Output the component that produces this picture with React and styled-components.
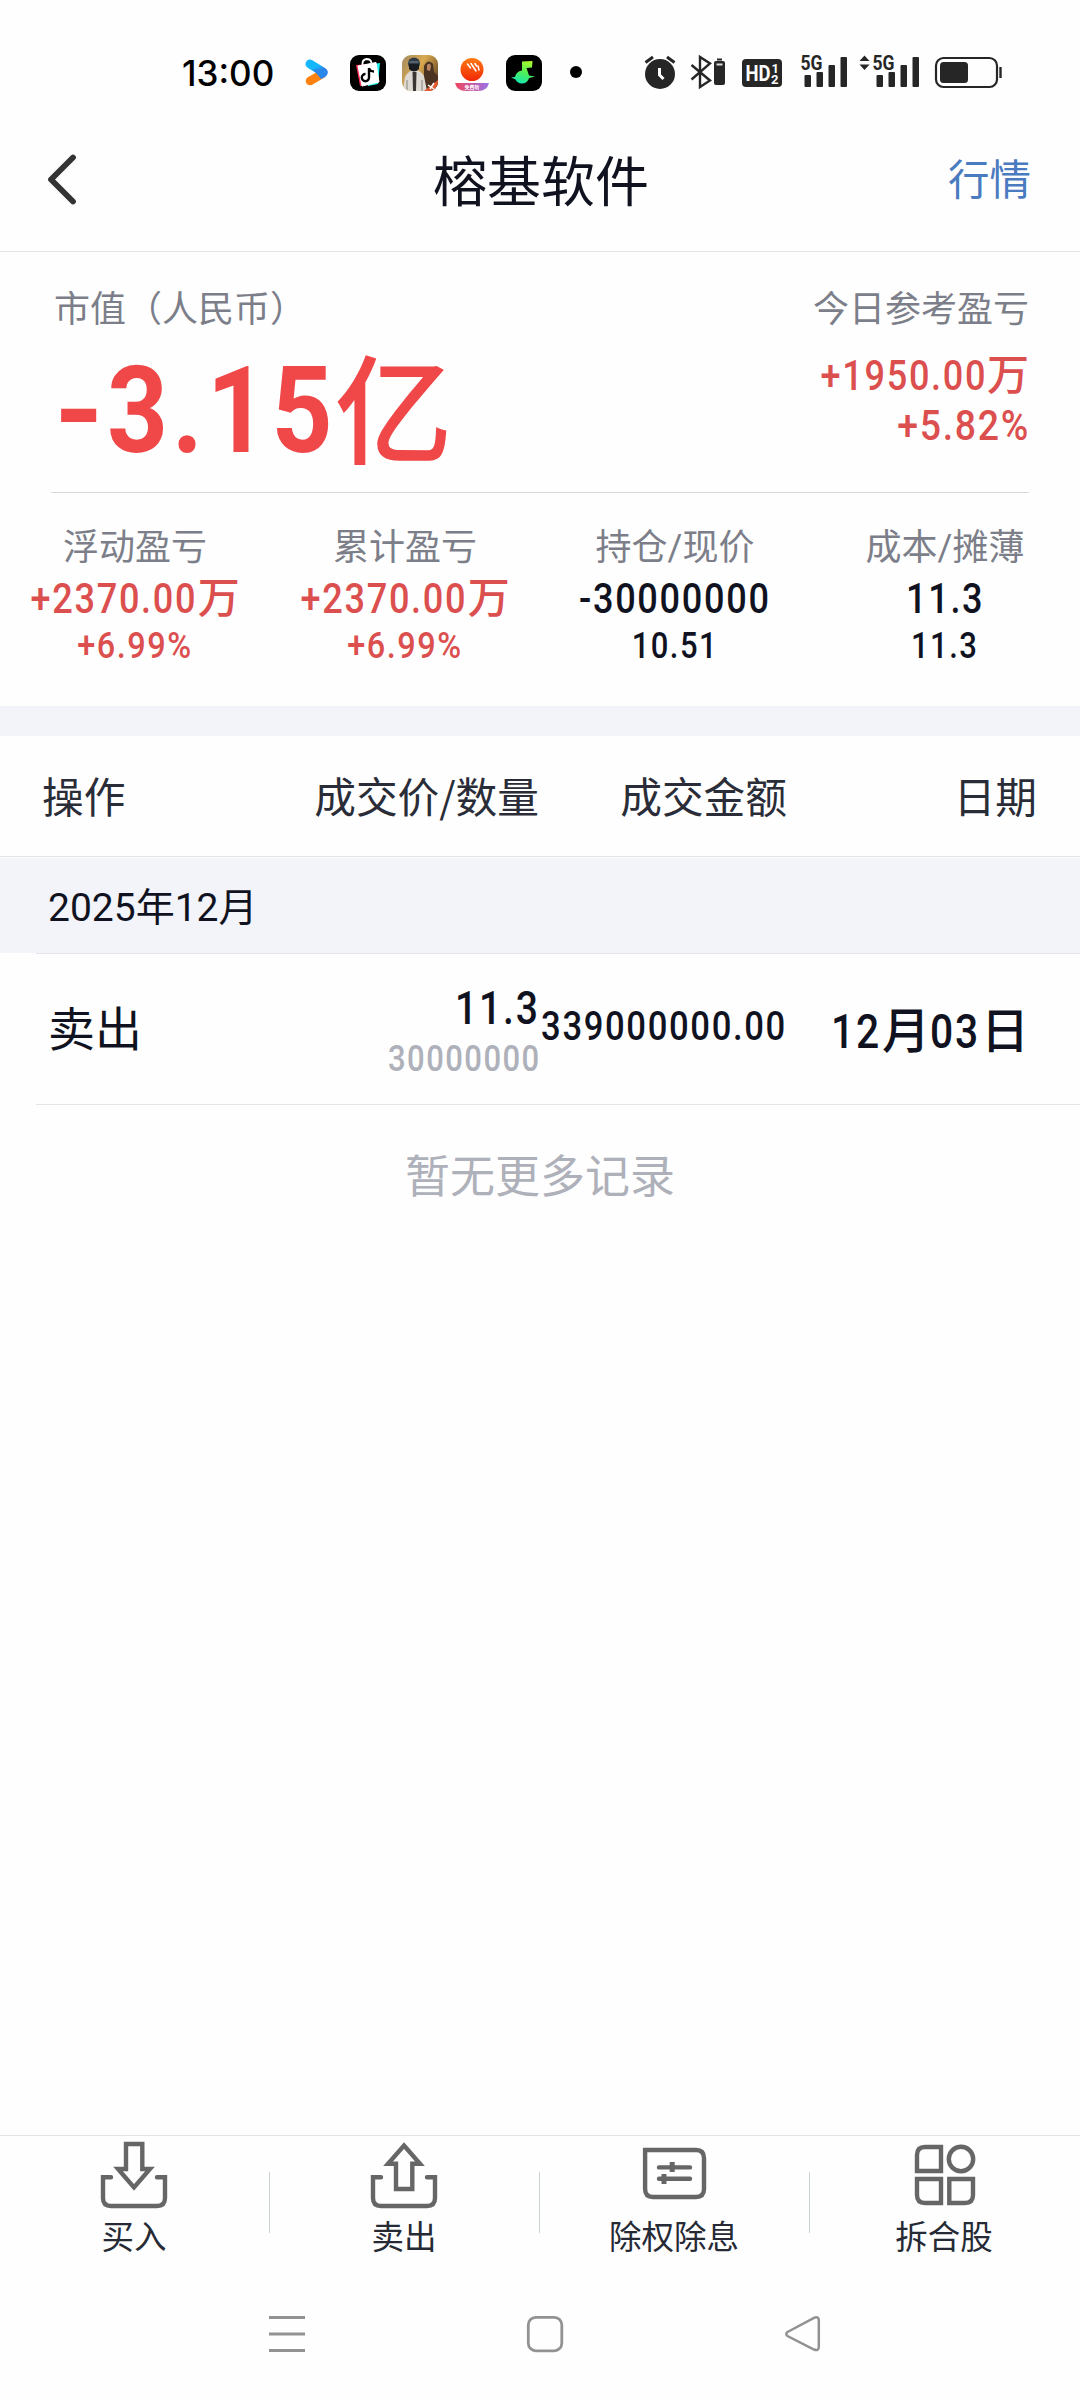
import React from "react";
import styled, { createGlobalStyle } from "styled-components";

const sans = `Roboto, "Noto Sans CJK SC", sans-serif`;

const GlobalStyle = createGlobalStyle`
  * { box-sizing: border-box; }
  body { margin: 0; background: #fefefe; }
  svg { display: block; flex: none; }
`;

const Screen = styled.div`
  width: 1080px;
  height: 2400px;
  display: flex;
  flex-direction: column;
  background: #fefefe;
  color: #10131f;
  font-family: ${sans};
  overflow: hidden;
`;

/* ---------- status bar ---------- */
const StatusBar = styled.div`
  height: 110px;
  flex: none;
  display: flex;
  align-items: flex-start;
  padding: 50px 77px 0 182px;
`;
const Clock = styled.div`
  width: 122px;
  font: 500 35px/46px Inter, Roboto, sans-serif;
  color: #000;
`;
const StatusGroup = styled.div`
  display: flex;
  gap: ${(p) => p.$gap}px;
  margin-left: ${(p) => (p.$end ? "auto" : 0)};
`;

/* ---------- title bar ---------- */
const TitleBar = styled.header`
  height: 142px;
  flex: none;
  display: grid;
  grid-template-columns: 1fr auto 1fr;
  align-items: center;
  padding: 0 49px 0 46px;
  border-bottom: 1px solid #e4e4e6;
`;
const Title = styled.h1`
  margin: 0;
  padding: 6px 0 0 5px;
  font-size: 54px;
  line-height: 64px;
  font-weight: 400;
`;
const QuoteLink = styled.a`
  justify-self: end;
  font-size: 41.5px;
  line-height: 50px;
  color: #4a7abf;
`;

/* ---------- numbers ---------- */
const Num = styled.span`
  display: inline-block;
  letter-spacing: ${(p) => p.$ls || 0.047}em;
  transform: scaleX(${(p) => p.$sx || 0.85});
  transform-origin: ${(p) => p.$origin || "center"};
  margin-left: ${(p) => p.$ml || 0}px;
  margin-right: ${(p) => p.$mr || 0}px;
`;

/* ---------- summary ---------- */
const Summary = styled.section`
  height: 241px;
  flex: none;
  display: flex;
  justify-content: space-between;
  margin: 0 51px;
  padding: 36px 0 0 3px;
  border-bottom: 1px solid #d8d8db;
`;
const SummaryColumn = styled.div`
  display: flex;
  flex-direction: column;
  align-items: ${(p) => (p.$right ? "flex-end" : "flex-start")};
`;
const Label = styled.div`
  font-size: 36px;
  line-height: 44px;
  color: #7c7f89;
  white-space: nowrap;
`;
const MarketValue = styled.div`
  margin-top: 19px;
  font-size: 121px;
  line-height: 120px;
  font-weight: 700;
  color: #f04848;
  white-space: nowrap;
`;
const Unit = styled.span`
  font-size: ${(p) => p.$size}px;
  font-weight: 500;
  margin-left: ${(p) => p.$ml || 0}px;
  vertical-align: ${(p) => p.$drop || 0}px;
`;
const Figure = styled.div`
  margin-top: ${(p) => p.$mt || 0}px;
  font-size: 42.5px;
  line-height: 50px;
  font-weight: 500;
  color: ${(p) => (p.$up ? "#dc4f4f" : "#10131f")};
  white-space: nowrap;
`;
const SubFigure = styled(Figure)`
  font-size: 36.5px;
  line-height: 40px;
`;

/* ---------- stats ---------- */
const Stats = styled.section`
  height: 213px;
  flex: none;
  display: grid;
  grid-template-columns: repeat(4, 270px);
  padding-top: 33px;
`;
const Stat = styled.div`
  display: flex;
  flex-direction: column;
  align-items: center;
`;
const Band = styled.div`
  height: 30px;
  flex: none;
  background: #f3f4f9;
`;

/* ---------- table ---------- */
const TableHead = styled.div`
  height: 121px;
  flex: none;
  display: grid;
  grid-template-columns: 199px 298px 248px 250px;
  align-items: center;
  padding: 0 0 2px 42px;
  margin-bottom: 1px;
  border-bottom: 1px solid #e3e4e6;
  font-family: "Noto Sans CJK SC", sans-serif;
  font-size: 41.7px;
  line-height: 50px;
  color: #2a2d38;
`;
const Cell = styled.div`
  text-align: ${(p) => (p.$left ? "left" : "right")};
  white-space: nowrap;
`;
const Month = styled.div`
  height: 95px;
  flex: none;
  padding: 27px 0 0 48px;
  background: #f3f4f9;
  font-size: 39px;
  line-height: 46px;
`;
const Row = styled.div`
  height: 152px;
  flex: none;
  display: grid;
  grid-template-columns: 163px 340px 248px 242px;
  align-items: start;
  margin-left: 36px;
  border-top: 1px solid #e4e5e8;
  border-bottom: 1px solid #e4e5e8;
`;
const Action = styled.div`
  padding: 46px 0 0 12px;
  font-size: 47px;
  line-height: 60px;
`;
const PriceCell = styled.div`
  padding-top: 29px;
  text-align: right;
`;
const Price = styled.div`
  font-size: 46px;
  line-height: 50px;
  font-weight: 500;
`;
const Quantity = styled.div`
  margin-top: 6px;
  font-size: 36.5px;
  line-height: 40px;
  font-weight: 500;
  color: #aeb0ba;
`;
const Amount = styled.div`
  display: flex;
  justify-content: flex-end;
  padding-top: 47px;
  font-size: 41px;
  line-height: 50px;
  font-weight: 500;
`;
const DateCell = styled.div`
  padding-top: 48px;
  text-align: right;
  font-size: 48px;
  line-height: 60px;
  font-weight: 500;
  white-space: nowrap;
`;
const NoMore = styled.div`
  flex: 1;
  padding-top: 48px;
  text-align: center;
  font-size: 45px;
  line-height: 50px;
  color: #aeb0ba;
`;

/* ---------- bottom ---------- */
const TabBar = styled.nav`
  height: 125px;
  flex: none;
  display: grid;
  grid-template-columns: repeat(4, 270px);
  border-top: 1px solid #e2e3e4;
`;
const Tab = styled.button`
  position: relative;
  border: 0;
  padding: 0;
  background: none;
  display: flex;
  flex-direction: column;
  align-items: center;
  gap: 6px;
  font: 400 32.5px/40px ${sans};
  color: #262a35;
  & + &::before {
    content: "";
    position: absolute;
    left: -1px;
    top: 36px;
    width: 1px;
    height: 61px;
    background: #cbd2d3;
  }
`;
const TabLabel = styled.span`
  padding-right: 2px;
`;
const SystemNav = styled.div`
  height: 140px;
  flex: none;
  display: flex;
  justify-content: center;
  gap: 218px;
  padding: 52px 0 0 12px;
`;

/* ---------- icons ---------- */
const Icon = ({ w, h, x, y, children, ...rest }) => (
  <svg width={w} height={h} viewBox={`${x} ${y} ${w} ${h}`} fill="none" {...rest}>
    {children}
  </svg>
);

const VideoIcon = () => (
  <Icon x={304} y={50} w={30} h={44}>
    <defs>
      <linearGradient id="vb" x1="0" y1="0" x2="1" y2="1">
        <stop offset="0.4" stopColor="#15b7fb" />
        <stop offset="1" stopColor="#2f6fe0" />
      </linearGradient>
    </defs>
    <path d="M310 81 L322 74" stroke="#ff8210" strokeWidth="8.500" strokeLinecap="round" />
    <path d="M310 64 L323 72" stroke="url(#vb)" strokeWidth="9" strokeLinecap="round" />
    <path d="M313 69 L327 70 Q329 74 325 77 L321 79 Z" fill="#2b86ea" />
  </Icon>
);
const ShopIcon = () => (
  <Icon x={350} y={50} w={36} h={44}>
    <rect x="350" y="55" width="36" height="36" rx="9" fill="#000" />
    <path d="M356 65 l14 -1 2 20 -12 2z" fill="#fe2c55" />
    <path d="M367 65 l13 -2 -2 21 -10 2z" fill="#25f4ee" />
    <path d="M358 66 L376 62.500 L379 82 L362 86 Z" fill="#fff" stroke="#fff" strokeLinejoin="round" />
    <path d="M362.500 65 Q362 59.500 366.500 59 Q371 59 371.500 63" stroke="#fff" strokeWidth="1.8" />
    <path d="M369 68 V77.500 A3.600 3.600 0 1 1 365.500 74 M369 68 Q370 71.500 374 71.500" stroke="#000" strokeWidth="2.4" />
  </Icon>
);
const GameIcon = () => (
  <Icon x={402} y={50} w={36} h={44}>
    <defs>
      <clipPath id="gc"><rect x="402" y="55" width="36" height="36" rx="9" /></clipPath>
      <linearGradient id="gg" x1="0" y1="0" x2="1" y2="0.6">
        <stop offset="0" stopColor="#a08a63" />
        <stop offset="0.5" stopColor="#d9a94f" />
        <stop offset="1" stopColor="#6a4c28" />
      </linearGradient>
    </defs>
    <g clipPath="url(#gc)">
      <rect x="402" y="55" width="36" height="36" fill="url(#gg)" />
      <path d="M424 66 q4 -8 9 -2 l1 8 4 4 v12 l-14 3z" fill="#4b3322" />
      <path d="M427 65 q3 -3 4 1 l-1 5 -3 -1z" fill="#b98763" />
      <path d="M403 91 L405 77 Q409 70 414 70 Q421 70 424 76 L427 91 Z" fill="#dedad3" />
      <path d="M412.500 72 L416.500 72 L416 91 L413 91 Z" fill="#3a3433" />
      <path d="M407 91 V80 M422 91 V80" stroke="#8b857d" />
      <circle cx="414" cy="63.500" r="6" fill="#303b46" />
      <path d="M409 64 h10 v5 q-5 5 -10 0z" fill="#191d21" />
      <path d="M409.500 62 h9" stroke="#7b8b99" />
      <path d="M424 91 L438 80 V91 Z" fill="#e4582f" />
      <path d="M428 85 l6 4 M434 83 l-4 6" stroke="#fff" strokeWidth="1.500" />
    </g>
  </Icon>
);
const LiveIcon = () => (
  <Icon x={454} y={50} w={36} h={44}>
    <defs>
      <linearGradient id="lr" x1="0" y1="0" x2="0" y2="1">
        <stop offset="0" stopColor="#ff7a12" />
        <stop offset="1" stopColor="#f02808" />
      </linearGradient>
      <linearGradient id="lp" x1="0" y1="0" x2="1" y2="0">
        <stop offset="0" stopColor="#f0445c" />
        <stop offset="1" stopColor="#9a72ea" />
      </linearGradient>
    </defs>
    <circle cx="472" cy="69.500" r="11.500" fill="url(#lr)" />
    <path d="M467.500 64 l3 4 M471 63.500 l5 7.500 M475 63.500 l1.500 2.500 M478 66 l1 4" stroke="#fff" strokeWidth="1.500" strokeLinecap="round" />
    <path d="M455 83 H489 Q487 91 478 91 H466 Q457 91 455 83 Z" fill="url(#lp)" />
    <text x="472" y="89" fontSize="5" fontWeight="700" fill="#fff" textAnchor="middle" fontFamily="Noto Sans CJK SC, sans-serif">免费听</text>
  </Icon>
);
const MusicIcon = () => (
  <Icon x={506} y={50} w={36} h={44}>
    <defs>
      <linearGradient id="mg" x1="0.7" y1="0" x2="0.3" y2="1">
        <stop offset="0" stopColor="#a8fb2b" />
        <stop offset="0.5" stopColor="#4ff05a" />
        <stop offset="1" stopColor="#12e6b4" />
      </linearGradient>
    </defs>
    <rect x="506" y="55" width="36" height="36" rx="9" fill="#000" />
    <path d="M522 61.500 L532.500 61 L532 67.500 L526.500 68 L529 75.500 L535 76.500 L529 78 A7.200 7.200 0 0 1 515.500 79.500 L511 77.500 L515 77 Q516 71.500 522 70.500 Z" fill="url(#mg)" />
  </Icon>
);
const DotIcon = () => (
  <Icon x={558} y={50} w={32} h={44}><circle cx="576" cy="72" r="6" fill="#000" /></Icon>
);
const ink = "#262626";
const AlarmIcon = () => (
  <Icon x={643} y={50} w={37} h={44}>
    <circle cx="660" cy="74" r="15" fill={ink} />
    <path d="M645.500 62.500 L653 57 M674.500 62.500 L667 57" stroke={ink} strokeWidth="3" />
    <path d="M659.500 68 V75 L663.500 79" stroke="#fefefe" strokeWidth="3" />
  </Icon>
);
const BluetoothIcon = () => (
  <Icon x={690} y={50} w={42} h={44}>
    <path d="M691.500 65 L710 80.500 L700 87 V57 L710 63.500 L691.500 79.500" stroke={ink} strokeWidth="2.400" />
    <rect x="714" y="61" width="11" height="24" rx="2" fill={ink} />
    <rect x="717" y="58.500" width="5" height="2" fill={ink} />
    <path d="M716.500 64.500 h6" stroke="#ddd" strokeWidth="2" />
  </Icon>
);
const HdIcon = () => (
  <Icon x={742} y={50} w={48} h={44}>
    <rect x="742" y="59" width="40" height="28" rx="4" fill={ink} />
    <g fill="#fefefe" fontFamily="Roboto, sans-serif" fontWeight="700">
      <text x="745.500" y="80.800" fontSize="21.500" textLength="25" lengthAdjust="spacingAndGlyphs">HD</text>
      <text x="771.500" y="73" fontSize="13">1</text>
      <text x="771" y="83.500" fontSize="13">2</text>
    </g>
  </Icon>
);
const Bars = ({ x }) => (
  <g fill={ink}>
    <text x={x - 4} y="70" fontSize="20" fontWeight="700" fontFamily="Roboto, sans-serif" textLength="22" lengthAdjust="spacingAndGlyphs">5G</text>
    <rect x={x} y="75" width="6.500" height="12" rx="1" />
    <rect x={x + 12} y="72" width="6.500" height="15" rx="1" />
    <rect x={x + 24} y="65" width="6.500" height="22" rx="1" />
    <rect x={x + 36} y="57" width="6.500" height="30" rx="1" />
  </g>
);
const SignalIcon = () => (
  <Icon x={800} y={50} w={48} h={44}><Bars x={804.5} /></Icon>
);
const SignalDataIcon = () => (
  <Icon x={858} y={50} w={66} h={44}>
    <path d="M859.500 61 L864.500 55.500 L869.500 61 Z M859.500 64.500 L864.500 70 L869.500 64.500 Z" fill={ink} />
    <Bars x={876.5} />
  </Icon>
);
const BatteryIcon = () => (
  <Icon x={934} y={50} w={69} h={44}>
    <rect x="936" y="58" width="61" height="29" rx="7.500" stroke={ink} strokeWidth="2.200" />
    <rect x="940" y="62" width="28" height="21" rx="3.500" fill={ink} />
    <path d="M1000.500 67 V78" stroke={ink} strokeWidth="2.400" />
  </Icon>
);

const BackIcon = () => (
  <Icon x={46.5} y={151.500} w={32} h={58}>
    <path d="M73.500 157 L51.500 179 L73.500 201" stroke="#333" strokeWidth="5.800" strokeLinecap="round" strokeLinejoin="round" />
  </Icon>
);

const TabIcon = ({ x, children }) => (
  <Icon x={x} y={2136} w={72} h={76} stroke="#666" strokeWidth="4.4">
    {children}
  </Icon>
);
const Tray = () => (
  <path d="M111 2177.200 H103 V2198 Q103 2206 111 2206 H157 Q165 2206 165 2198 V2177.200 H157" strokeLinecap="round" />
);
const BuyIcon = () => (
  <TabIcon x={99}>
    <path d="M126 2144 H142.300 V2169 H150 L134 2187.500 L118 2169 H126 Z" />
    <Tray />
  </TabIcon>
);
const SellIcon = () => (
  <TabIcon x={99}>
    <path d="M134 2145.500 L150 2163.700 H142.300 V2189 H126 V2163.700 H118 Z" />
    <Tray />
  </TabIcon>
);
const AdjustIcon = () => (
  <TabIcon x={639}>
    <path d="M645.100 2150 H696 Q704 2150 704 2158 V2189 Q704 2197 696 2197 H653 Q645.100 2197 645.100 2189 Z" />
    <path d="M659 2167.400 H690 M659 2178.800 H690" strokeLinecap="round" />
    <path d="M672.200 2162 V2172 M664 2174 V2184" strokeWidth="5" />
  </TabIcon>
);
const SplitIcon = () => (
  <TabIcon x={909}>
    <path d="M941 2171 H917 V2155 Q917 2147 925 2147 H941 Z" />
    <circle cx="961" cy="2159" r="12.200" />
    <path d="M941 2179 H917 V2195 Q917 2203 925 2203 H941 Z" />
    <path d="M949.300 2179 H973 V2195 Q973 2203 965 2203 H949.300 Z" />
  </TabIcon>
);

const navInk = "#929292";
const MenuIcon = () => (
  <Icon x={268} y={2312} w={40} h={44}>
    <path d="M269 2317.500 H305 M269 2334 H305 M269 2350.500 H305" stroke={navInk} strokeWidth="3" />
  </Icon>
);
const HomeIcon = () => (
  <Icon x={526} y={2312} w={40} h={44}>
    <rect x="528.300" y="2317.300" width="33.500" height="33.500" rx="7.500" stroke={navInk} strokeWidth="2.800" />
  </Icon>
);
const ReturnIcon = () => (
  <Icon x={784} y={2312} w={40} h={44}>
    <path d="M787.500 2332 L814 2317.800 Q819 2316 818.800 2320.500 V2346.500 Q819 2351.500 814 2349.500 L787.500 2336 Q785 2334 787.500 2332 Z" stroke={navInk} strokeWidth="2.500" />
  </Icon>
);

/* ---------- data ---------- */
const stats = [
  { label: "浮动盈亏", value: "+2370.00", unit: "万", sub: "+6.99%", up: true },
  { label: "累计盈亏", value: "+2370.00", unit: "万", sub: "+6.99%", up: true },
  { label: "持仓/现价", value: "-30000000", sub: "10.51" },
  { label: "成本/摊薄", value: "11.3", sub: "11.3" },
];
const tabs = [
  { label: "买入", icon: <BuyIcon /> },
  { label: "卖出", icon: <SellIcon /> },
  { label: "除权除息", icon: <AdjustIcon /> },
  { label: "拆合股", icon: <SplitIcon /> },
];

export default function App() {
  return (
    <Screen>
      <GlobalStyle />
      <StatusBar>
        <Clock>13:00</Clock>
        <StatusGroup $gap={16}>
          <VideoIcon />
          <ShopIcon />
          <GameIcon />
          <LiveIcon />
          <MusicIcon />
          <DotIcon />
        </StatusGroup>
        <StatusGroup $gap={10} $end>
          <AlarmIcon />
          <BluetoothIcon />
          <HdIcon />
          <SignalIcon />
          <SignalDataIcon />
          <BatteryIcon />
        </StatusGroup>
      </StatusBar>

      <TitleBar>
        <BackIcon />
        <Title>榕基软件</Title>
        <QuoteLink>行情</QuoteLink>
      </TitleBar>

      <Summary>
        <SummaryColumn>
          <Label>市值（人民币）</Label>
          <MarketValue>
            <Num $sx={1.05} $ls={0.0001} $origin="left">-</Num>
            <Num $sx={0.88} $ls={0.036} $ml={5} $origin="left">3.15</Num>
            <Unit $size={118} $ml={-33} $drop={-3}>亿</Unit>
          </MarketValue>
        </SummaryColumn>
        <SummaryColumn $right>
          <Label>今日参考盈亏</Label>
          <Figure $up $mt={19}>
            <Num $origin="right">+1950.00</Num>
            <Unit $size={42}>万</Unit>
          </Figure>
          <Figure $up>
            <Num $sx={0.88} $origin="right" $mr={-1}>+5.82%</Num>
          </Figure>
        </SummaryColumn>
      </Summary>

      <Stats>
        {stats.map((s) => (
          <Stat key={s.label}>
            <Label>{s.label}</Label>
            <Figure $up={s.up} $mt={4}>
              <Num $origin={s.unit ? "right" : "center"} $ml={s.unit ? -29 : 0}>{s.value}</Num>
              {s.unit && <Unit $size={42}>{s.unit}</Unit>}
            </Figure>
            <SubFigure $up={s.up} $mt={2}>
              <Num $sx={s.up ? 0.89 : 0.85}>{s.sub}</Num>
            </SubFigure>
          </Stat>
        ))}
      </Stats>

      <Band />

      <TableHead>
        <Cell $left>操作</Cell>
        <Cell>成交价/数量</Cell>
        <Cell>成交金额</Cell>
        <Cell>日期</Cell>
      </TableHead>
      <Month>2025年12月</Month>
      <Row>
        <Action>卖出</Action>
        <PriceCell>
          <Price><Num $origin="right" $mr={-1}>11.3</Num></Price>
          <Quantity><Num $origin="right" $mr={-2}>30000000</Num></Quantity>
        </PriceCell>
        <Amount><Num $sx={0.845} $origin="right">339000000.00</Num></Amount>
        <DateCell>
          <Num $origin="left" $mr={-8}>12</Num>月<Num $origin="left" $mr={-8}>03</Num>日
        </DateCell>
      </Row>
      <NoMore>暂无更多记录</NoMore>

      <TabBar>
        {tabs.map((t) => (
          <Tab key={t.label}>
            {t.icon}
            <TabLabel>{t.label}</TabLabel>
          </Tab>
        ))}
      </TabBar>
      <SystemNav>
        <MenuIcon />
        <HomeIcon />
        <ReturnIcon />
      </SystemNav>
    </Screen>
  );
}
